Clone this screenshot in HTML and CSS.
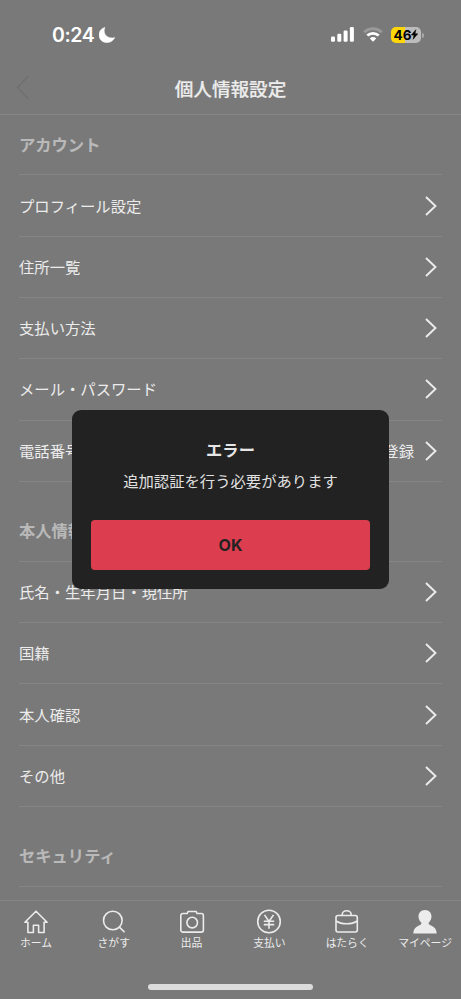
FILE: index.html
```
<!DOCTYPE html>
<html lang="ja">
<head>
<meta charset="utf-8">
<title>個人情報設定</title>
<link rel="stylesheet" href="styles.css">
</head>
<body>
<div class="screen">
  <div class="status">
    <div class="clock"><span>0:24</span>
      <svg class="moon" width="16" height="16" viewBox="0 0 16 16"><path d="M5.900 0.400C2.300 1.300 0 4.300 0 7.900c0 4.400 3.500 7.700 8 7.700 3.400 0 6.400-1.900 7.800-5-.9.300-1.700.4-2.600.4-4.600 0-8-3-8-7.200 0-1.200.2-2.300.7-3.400z" fill="#fff" stroke="#fff" stroke-width=".5"/></svg>
    </div>
    <div class="indicators">
      <svg width="24" height="15" viewBox="0 0 24 15" fill="#fff"><rect x="0" y="9.500" width="4" height="5.200" rx="1.200"/><rect x="6.300" y="6.800" width="4" height="7.900" rx="1.200"/><rect x="12.600" y="3.600" width="4" height="11.100" rx="1.200"/><rect x="18.900" y="0" width="4" height="14.700" rx="1.200"/></svg>
      <svg class="wifi" width="20" height="15" viewBox="0 0 20 15"><path d="M1.200 5.300a12.600 12.600 0 0 1 17.600 0" fill="none" stroke="#999" stroke-width="2.900"/><path d="M4.300 8.600a8.200 8.200 0 0 1 11.400 0" fill="none" stroke="#fff" stroke-width="2.800"/><path d="M6.800 11.400a4.600 4.600 0 0 1 6.400 0L10 14.700z" fill="#fff"/></svg>
      <div class="battery"><span>46</span><svg width="7" height="11" viewBox="0 0 8 11"><path d="M5.500 0 .4 6.200h3L2.400 11 7.700 4.700H4.600z" fill="#000" stroke="#000" stroke-width=".6"/></svg></div>
    </div>
  </div>
  <header class="nav">
    <svg class="back" width="14" height="25" viewBox="0 0 14 25"><path d="M12.500 1 1.500 12.500l11 11.500" fill="none" stroke="#6f6f6f" stroke-width="1.300"/></svg>
    <h1>個人情報設定</h1>
  </header>
  <main>
    <h2 class="first">アカウント</h2>
    <ul>
      <li><span>プロフィール設定</span><svg class="chev" viewBox="0 0 12 20"><path d="m1 1 9.500 9L1 19"/></svg></li>
      <li><span>住所一覧</span><svg class="chev" viewBox="0 0 12 20"><path d="m1 1 9.500 9L1 19"/></svg></li>
      <li><span>支払い方法</span><svg class="chev" viewBox="0 0 12 20"><path d="m1 1 9.500 9L1 19"/></svg></li>
      <li><span>メール・パスワード</span><svg class="chev" viewBox="0 0 12 20"><path d="m1 1 9.500 9L1 19"/></svg></li>
      <li><span>電話番号</span><span class="value">登録</span><svg class="chev" viewBox="0 0 12 20"><path d="m1 1 9.500 9L1 19"/></svg></li>
    </ul>
    <h2>本人情報</h2>
    <ul>
      <li><span>氏名・生年月日・現住所</span><svg class="chev" viewBox="0 0 12 20"><path d="m1 1 9.500 9L1 19"/></svg></li>
      <li><span>国籍</span><svg class="chev" viewBox="0 0 12 20"><path d="m1 1 9.500 9L1 19"/></svg></li>
      <li><span>本人確認</span><svg class="chev" viewBox="0 0 12 20"><path d="m1 1 9.500 9L1 19"/></svg></li>
      <li><span>その他</span><svg class="chev" viewBox="0 0 12 20"><path d="m1 1 9.500 9L1 19"/></svg></li>
    </ul>
    <h2>セキュリティ</h2>
  </main>
  <footer>
    <nav class="tabs">
      <div class="tab"><svg viewBox="0 0 26 26"><path d="M13 2.200 1.900 13.200h3v10.300h5.500v-7.300h5.200v7.300h5.500V13.200h3z"/></svg><span>ホーム</span></div>
      <div class="tab"><svg viewBox="0 0 26 26"><circle cx="11.800" cy="11.500" r="9.300"/><path d="m18.400 18.100 5.200 5.200"/></svg><span>さがす</span></div>
      <div class="tab"><svg viewBox="0 0 26 26"><path d="M8.200 4.500 9 2.500h8.200l.8 2h4.200a2.200 2.200 0 0 1 2.200 2.200v14.200a2.200 2.200 0 0 1-2.200 2.200H4a2.200 2.200 0 0 1-2.200-2.200V6.700A2.200 2.200 0 0 1 4 4.500z"/><circle cx="13.200" cy="13.600" r="5.300"/></svg><span>出品</span></div>
      <div class="tab"><svg viewBox="0 0 26 26"><circle cx="13" cy="12.500" r="11.300"/><path d="m8.500 5.900 4.500 6.600 4.500-6.600M13 12.500v7.300M7.800 12.300h10.400M7.800 15.600h10.400"/></svg><span>支払い</span></div>
      <div class="tab"><svg viewBox="0 0 26 26"><rect x="2" y="6.500" width="21.300" height="16.500" rx="2"/><path d="M8.200 6.500V5.700a4.500 4 0 0 1 9 0v.8M2 12c3 2 6.800 2.700 10.700 2.700S20.300 14 23.300 12"/></svg><span>はたらく</span></div>
      <div class="tab active"><svg viewBox="0 0 26 26"><path d="M13 1c4 0 6.500 2.900 6.500 6.500 0 2.500-1.200 4.700-2.900 6.200v.9c0 .9 1.300 1.400 3.400 2.400 2.800 1.200 4.700 3.600 4.700 7.600H1.300c0-4 1.900-6.400 4.700-7.600 2.100-1 3.400-1.500 3.400-2.400v-.9C7.700 12.200 6.500 10 6.500 7.500 6.500 3.900 9 1 13 1z"/></svg><span>マイページ</span></div>
    </nav>
    <div class="home-bar"></div>
  </footer>
  <div class="dialog" role="dialog">
    <h3>エラー</h3>
    <p>追加認証を行う必要があります</p>
    <button>OK</button>
  </div>
</div>
</body>
</html>
```
FILE: styles.css
```
* { box-sizing: border-box; }
body { margin: 0; }
.screen {
  position: relative;
  width: 461px;
  height: 999px;
  overflow: hidden;
  background: #797979;
  color: #ececec;
  font-family: Inter, "Noto Sans CJK JP", sans-serif;
  display: flex;
  flex-direction: column;
}
h1, h2, h3, p, ul { margin: 0; padding: 0; }
.status {
  height: 62px;
  padding: 7px 40px 0 52px;
  display: flex;
  justify-content: space-between;
  align-items: center;
}
.clock {
  display: flex;
  align-items: center;
  gap: 5px;
  color: #fff;
  font-size: 19.5px;
  font-weight: 600;
  letter-spacing: -0.4px;
  line-height: 24px;
}
.indicators { display: flex; align-items: center; gap: 8px; }
.battery {
  position: relative;
  width: 30px;
  height: 16px;
  border-radius: 5px;
  background: linear-gradient(90deg, #ffd60a 46%, #bcbcbc 46%);
  display: flex;
  align-items: center;
  justify-content: center;
  color: #000;
  font-size: 13.5px;
  font-weight: 700;
  line-height: 16px;
}
.battery::after {
  content: "";
  position: absolute;
  left: 31px;
  top: 6px;
  width: 1.5px;
  height: 5px;
  border-radius: 0 2px 2px 0;
  background: #a8a8a8;
}
.nav {
  height: 53px;
  border-bottom: 1px solid #868686;
  display: grid;
  grid-template-columns: 60px 1fr 60px;
  align-items: center;
}
.back { margin: 0 0 2px 16px; }
h1 {
  grid-column: 2;
  padding-top: 2px;
  text-align: center;
  font-size: 18.6px;
  font-weight: 500;
  line-height: 28px;
  -webkit-text-stroke: 0.2px currentColor;
}
main { flex: 1; padding: 0 19px; min-height: 0; }
h2 {
  height: 79.9px;
  padding-top: 17px;
  border-bottom: 1px solid #868686;
  display: flex;
  align-items: center;
  color: #b9b9b9;
  font-size: 16.3px;
  font-weight: 700;
}
h2.first { height: 60.4px; padding: 0 0 2px; }
ul { list-style: none; }
li {
  height: 61.3px;
  border-bottom: 1px solid #868686;
  padding-right: 5px;
  display: flex;
  align-items: center;
  justify-content: space-between;
  font-size: 15.33px;
}
li span { padding-bottom: 2px; }
.value { margin-left: auto; margin-right: 11px; }
.chev { width: 12px; height: 20px; fill: none; stroke: #ececec; stroke-width: 1.9; }
footer { height: 99px; border-top: 1px solid #868686; }
.tabs { height: 83px; display: flex; justify-content: space-between; margin: 0 -3px; }
.tab {
  width: 78px;
  padding-top: 8px;
  display: flex;
  flex-direction: column;
  align-items: center;
  font-size: 10.8px;
  line-height: 16px;
  white-space: nowrap;
}
.tab svg { width: 26px; height: 26px; margin-bottom: 1px; fill: none; stroke: #ececec; stroke-width: 1.6; stroke-linejoin: round; }
.tab.active svg { fill: #ececec; stroke: none; }
.home-bar { width: 165px; height: 6px; margin: 0 auto; border-radius: 3px; background: #dcdcdc; }
.dialog {
  position: absolute;
  left: 72px;
  top: 410px;
  width: 317px;
  height: 179px;
  border-radius: 9px;
  padding: 27px 19px 19px;
  background: #222;
  text-align: center;
}
h3 { font-size: 16.3px; font-weight: 700; line-height: 26px; color: #e6e6e6; }
p { margin-top: 7px; font-size: 15.33px; line-height: 24px; color: #e0e0e0; }
button {
  display: block;
  width: 279px;
  height: 50px;
  margin-top: 26px;
  padding: 0;
  border: 0;
  border-radius: 4px;
  background: #dc3e50;
  color: #222;
  font: 700 16px Inter, sans-serif;
}
```
